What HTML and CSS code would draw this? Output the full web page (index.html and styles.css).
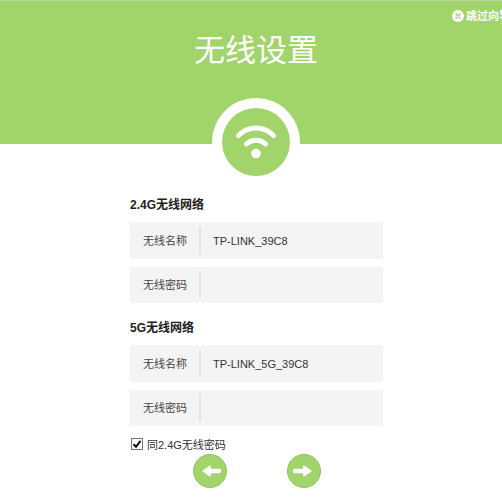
FILE: index.html
```html
<!DOCTYPE html>
<html lang="zh">
<head>
<meta charset="utf-8">
<title>无线设置</title>
<link rel="stylesheet" href="styles.css">
</head>
<body>
<header class="hero">
  <a class="skip"><svg class="skip-icon" viewBox="0 0 12 12"><circle cx="6" cy="6" r="6" fill="#fff"/><path d="M4 4l4 4M8 4l-4 4" stroke="#a2d46c" stroke-width="1.6" stroke-linecap="round"/></svg>跳过向导</a>
  <h1 class="title">无线设置</h1>
  <div class="badge">
    <svg class="wifi" viewBox="0 0 68 68">
      <circle cx="34" cy="34" r="34" fill="#a2d46c"/>
      <g fill="none" stroke="#fff" stroke-width="5" stroke-linecap="round">
        <path d="M16.500 27.500C26.500 17.500 41.500 17.500 51.500 27.500"/>
        <path d="M24.500 36C30 31 38 31 43.500 36"/>
      </g>
      <circle cx="34" cy="45.500" r="4.800" fill="#fff"/>
    </svg>
  </div>
</header>
<main class="form">
  <section class="group">
    <h2 class="group-title">2.4G无线网络</h2>
    <div class="field"><span class="label">无线名称</span><span class="value">TP-LINK_39C8</span></div>
    <div class="field"><span class="label">无线密码</span><span class="value"></span></div>
  </section>
  <section class="group">
    <h2 class="group-title">5G无线网络</h2>
    <div class="field"><span class="label">无线名称</span><span class="value">TP-LINK_5G_39C8</span></div>
    <div class="field"><span class="label">无线密码</span><span class="value"></span></div>
  </section>
  <div class="same">
    <svg class="check" viewBox="0 0 12 12"><rect x="0.500" y="0.500" width="11" height="11" fill="#fff" stroke="#777"/><path d="M2.500 6.200L5 8.800L9.500 2.800" fill="none" stroke="#111" stroke-width="2"/></svg>
    <span>同2.4G无线密码</span>
  </div>
  <nav class="nav">
    <button class="round" aria-label="上一步"><svg viewBox="0 0 32 32"><path d="M25 16H14" stroke="#fff" stroke-width="4.500" stroke-linecap="round"/><path d="M16 11.500l-6.500 4.500 6.500 4.500z" fill="#fff" stroke="#fff" stroke-width="2" stroke-linejoin="round"/></svg></button>
    <button class="round" aria-label="下一步"><svg viewBox="0 0 32 32"><path d="M7 16H18" stroke="#fff" stroke-width="4.500" stroke-linecap="round"/><path d="M16 11.500l6.500 4.500-6.500 4.500z" fill="#fff" stroke="#fff" stroke-width="2" stroke-linejoin="round"/></svg></button>
  </nav>
</main>
</body>
</html>
```
FILE: styles.css
```css
* { box-sizing: border-box; }
html, body { margin: 0; height: 500px; overflow: hidden; background: #fff; }
body { font-family: "Liberation Sans", "Noto Sans CJK SC", sans-serif; color: #333; }

.hero {
  position: relative;
  height: 144px;
  background: #a2d46c;
  border-top: 1px solid #b5d99a;
  display: flex;
  justify-content: center;
  padding: 32px 0 0 10px;
}
.title { margin: 0; font-size: 31px; line-height: 36px; font-weight: 400; color: #fff; }
.skip {
  position: absolute;
  top: 8px;
  left: 452px;
  display: flex;
  align-items: center;
  gap: 2px;
  width: 50px;
  overflow: hidden;
  white-space: nowrap;
  font-size: 11px;
  line-height: 14px;
  font-weight: 700;
  color: #fff;
}
.skip-icon { flex: none; width: 12px; height: 12px; }
.badge {
  position: absolute;
  left: 212px;
  top: 97px;
  width: 88px;
  height: 88px;
  padding: 10px;
  border-radius: 50%;
  background: #fff;
}
.wifi { display: block; width: 68px; height: 68px; }

.form { width: 253px; margin-left: 130px; padding-top: 53px; }
.group { margin-bottom: 17px; }
.group + .group { margin-bottom: 0; }
.group-title { margin: 0 0 9px; font-size: 12px; line-height: 16px; font-weight: 700; color: #222; }
.field {
  display: flex;
  align-items: center;
  height: 36.500px;
  margin-bottom: 8px;
  background: #f4f4f4;
  font-size: 11px;
}
.label { width: 71px; height: 27px; line-height: 29px; padding-left: 13px; border-right: 2px solid #e2e2e2; color: #444; }
.value { padding-left: 12px; line-height: 29px; height: 27px; color: #333; }

.same { display: flex; align-items: center; gap: 4px; margin-top: 10px; height: 16px; font-size: 11px; color: #333; }
.check { flex: none; width: 12px; height: 12px; margin-left: 1px; }

.nav { display: flex; justify-content: center; gap: 60px; margin-top: 2px; }
.round { width: 34px; height: 34px; padding: 0; border: 1px solid #90c45e; border-radius: 50%; background: #a2d46c; }
.round svg { display: block; width: 32px; height: 32px; }
```
